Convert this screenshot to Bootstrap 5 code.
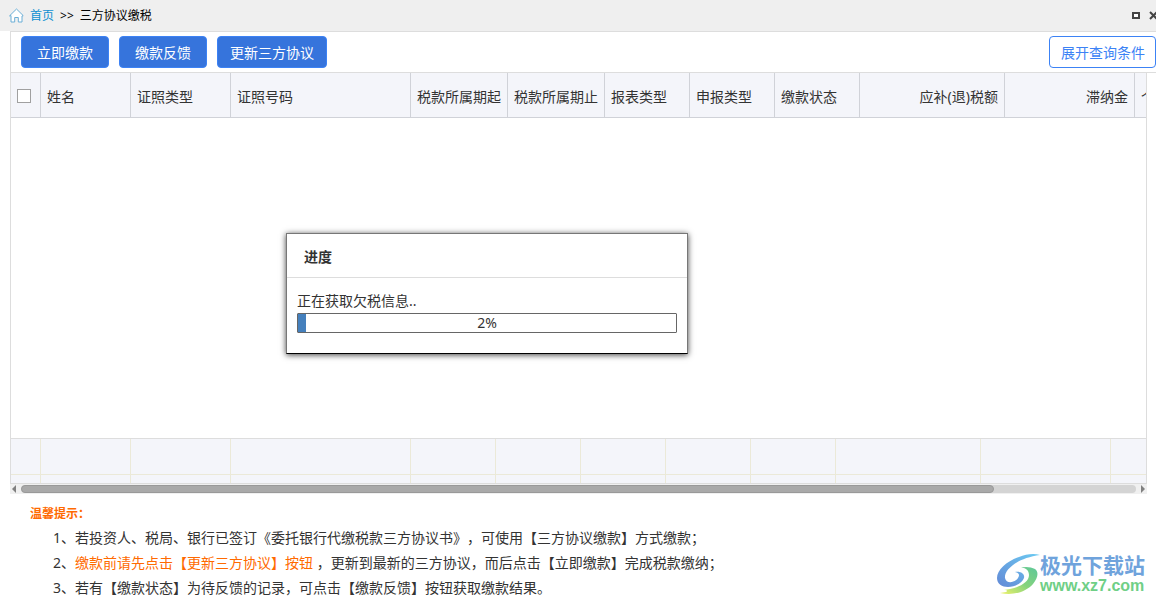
<!DOCTYPE html>
<html lang="zh-CN">
<head>
<meta charset="utf-8">
<meta name="viewport" content="width=device-width, initial-scale=1">
<title>三方协议缴税</title>
<link href="https://cdn.jsdelivr.net/npm/bootstrap@5.3.0/dist/css/bootstrap.min.css" rel="stylesheet">
<style>
  body { font: 14px/20px "Noto Sans", "Noto Sans CJK SC", sans-serif; color: #333; background: #fff; text-spacing-trim: space-all; overflow-x: hidden; }
  .titlebar { height: 31px; background: #efefef; font-size: 12px; color: #000; padding: 0 0 0 9px; }
  .titlebar a { color: #0e90d2; }
  .crumbs { gap: 6px; margin-left: 6px; }
  .win-btn { border: 0; background: none; padding: 0; line-height: 0; }
  .pane { margin-left: 10px; }
  .toolbar { border: 1px solid #ddd; border-right: 0; padding: 4px 0 4px 10px; gap: 10px; overflow: hidden; }
  .toolbar .btn { height: 32px; padding: 1px 15px 0; font-size: 14px; line-height: 30px; border-radius: 4px; white-space: nowrap; }
  .act { --bs-btn-color: #fff; --bs-btn-bg: #3674dc; --bs-btn-border-color: #3c82f5; }
  .toolbar .act-long { padding: 1px 12px 0; }
  .query { --bs-btn-color: #3c82f5; --bs-btn-border-color: #3c82f5; }
  .toolbar .query { padding: 1px 10px 0 11px; }
  .grid-box { margin-right: 9px; border: 1px solid #ddd; border-width: 0 1px 1px; }
  .clip { overflow: hidden; background: #f4f5fa; }
  .grid-table { table-layout: fixed; width: 1264px; border-collapse: separate; border-spacing: 0; }
  .grid-table th { height: 45px; padding: 4px 6px 0; font-weight: 400; white-space: nowrap; border-right: 1px solid #d0d2d8; border-bottom: 1px solid #d0d2d8; }
  .grid-table th.pick { padding-top: 2px; }
  .grid-table td { height: 36px; padding: 0; border-right: 1px solid #ebe9d8; border-bottom: 1px solid #ebe9d8; }
  .grid-table tr.slim td { height: 8px; border-bottom: 0; }
  .grid-table .form-check-input { width: 14px; height: 14px; margin: 0; border: 1px solid #a0a0a0; border-radius: 0; display: block; }
  .grid-body { height: 320px; }
  .grid-foot { border-top: 1px solid #ddd; }
  .hbar { margin-right: 9px; height: 10px; background: #f0f0f0; }
  .hbar-track { height: 8px; background: #d4d4d4; border-radius: 4px; margin: 0 4px; }
  .hbar-thumb { height: 8px; background: #a9a9a9; border: 1px solid #999; border-radius: 4px; }
  .tips { padding: 10px 0 0 30px; line-height: 25px; }
  .tips h2 { font-size: 12px; line-height: 20px; font-weight: 700; margin: 0 0 1px; }
  .tips p { margin: 0 0 0 23px; }
  .hot { color: #ff6a00; }
  .progress-dialog { position: absolute; left: 286px; top: 233px; width: 402px; border: 1px solid #777; border-bottom-color: #000; background: #fff; box-shadow: 0 1px 6px rgba(0,0,0,.75); }
  .progress-dialog h1 { font-size: 14px; line-height: 20px; font-weight: 700; margin: 0; padding: 13px 17px 10px; border-bottom: 1px solid #ddd; }
  .dialog-body { padding: 13px 10px 20px; }
  .meter { height: 20px; border: 1px solid #666; border-radius: 1px; background: #fff; font-size: 14px; position: relative; margin-top: 2px; }
  .meter .progress-bar { background: #4580bd; }
  .meter-text { position: absolute; inset: 0; text-align: center; line-height: 18px; color: #333; }
  .watermark { position: absolute; right: 11px; bottom: 7px; line-height: 1; }
  .wm-name { font: 700 21px/24px "Noto Sans CJK SC", sans-serif; color: #6fa3dc; }
  .wm-url { font: 700 16px/20px "Liberation Sans", sans-serif; color: #6fcf86; }
</style>
</head>
<body>
<header class="titlebar d-flex align-items-center">
  <svg width="15" height="15" viewBox="0 0 15 15" fill="#fff" stroke="#6aaed6" stroke-linejoin="round" stroke-linecap="round" aria-hidden="true"><path d="M.8 7.6 7.5 1l6.700 6.600-1.200.4v6H9.300V9.500H5.700V14H2V8z"/></svg>
  <nav class="crumbs d-flex" aria-label="位置">
    <a href="#" class="text-decoration-none">首页</a>
    <span>&gt;&gt;</span>
    <span>三方协议缴税</span>
  </nav>
  <div class="ms-auto d-flex gap-2">
    <button type="button" class="win-btn" aria-label="最大化"><svg width="10" height="10" viewBox="0 0 10 10"><path d="M2 2h6v5H2z" fill="#fff" stroke="#444" stroke-width="2"/></svg></button>
    <button type="button" class="win-btn" aria-label="关闭"><svg width="7" height="10" viewBox="0 0 7 10"><path d="M1 1l7 7M8 1L1 8" stroke="#444" stroke-width="2"/></svg></button>
  </div>
</header>

<main class="pane">
  <div class="toolbar d-flex">
    <button type="button" class="btn act">立即缴款</button>
    <button type="button" class="btn act">缴款反馈</button>
    <button type="button" class="btn act act-long">更新三方协议</button>
    <button type="button" class="btn query ms-auto">展开查询条件</button>
  </div>

  <section class="grid-box">
    <div class="clip">
      <table class="grid-table">
        <colgroup><col style="width:30px"><col style="width:90px"><col style="width:100px"><col style="width:180px"><col style="width:97px"><col style="width:97px"><col style="width:85px"><col style="width:85px"><col style="width:85px"><col style="width:145px"><col style="width:130px"><col></colgroup>
        <thead><tr>
          <th class="pick"><input type="checkbox" class="form-check-input" aria-label="全选"></th>
          <th>姓名</th><th>证照类型</th><th>证照号码</th><th>税款所属期起</th><th>税款所属期止</th><th>报表类型</th><th>申报类型</th><th>缴款状态</th><th class="text-end">应补(退)税额</th><th class="text-end">滞纳金</th><th>个</th>
        </tr></thead>
      </table>
    </div>
    <div class="grid-body"></div>
    <div class="clip grid-foot">
      <table class="grid-table">
        <colgroup><col style="width:30px"><col style="width:90px"><col style="width:100px"><col style="width:180px"><col style="width:85px"><col style="width:85px"><col style="width:85px"><col style="width:85px"><col style="width:85px"><col style="width:145px"><col style="width:130px"><col></colgroup>
        <tbody>
          <tr><td></td><td></td><td></td><td></td><td></td><td></td><td></td><td></td><td></td><td></td><td></td><td></td></tr>
          <tr class="slim"><td></td><td></td><td></td><td></td><td></td><td></td><td></td><td></td><td></td><td></td><td></td><td></td></tr>
        </tbody>
      </table>
    </div>
  </section>
  <div class="hbar d-flex align-items-center">
    <svg width="7" height="8" viewBox="0 0 7 8"><path d="M6 0v8L2 4z" fill="#808080"/></svg>
    <div class="hbar-track flex-grow-1"><div class="hbar-thumb" style="width:87.3%"></div></div>
    <svg width="7" height="8" viewBox="0 0 7 8"><path d="M1 0v8l4-4z" fill="#808080"/></svg>
  </div>
</main>

<section class="tips">
  <h2 class="hot">温馨提示：</h2>
  <p>1、若投资人、税局、银行已签订《委托银行代缴税款三方协议书》，可使用【三方协议缴款】方式缴款；</p>
  <p>2、<span class="hot">缴款前请先点击【更新三方协议】按钮</span> ，更新到最新的三方协议，而后点击【立即缴款】完成税款缴纳；</p>
  <p>3、若有【缴款状态】为待反馈的记录，可点击【缴款反馈】按钮获取缴款结果。</p>
</section>

<div class="progress-dialog" role="dialog" aria-labelledby="dlg-title">
  <h1 id="dlg-title">进度</h1>
  <div class="dialog-body">
    <div>正在获取欠税信息..</div>
    <div class="progress meter" role="progressbar" aria-valuenow="2" aria-valuemin="0" aria-valuemax="100">
      <div class="progress-bar" style="width:2%"></div>
      <span class="meter-text">2%</span>
    </div>
  </div>
</div>

<div class="watermark d-flex align-items-center">
  <svg width="43" height="42" viewBox="0 0 43 42" aria-hidden="true">
    <defs>
      <linearGradient id="wmBlue" x1="0" y1="1" x2="1" y2="0"><stop offset="0" stop-color="#6389d6"/><stop offset="1" stop-color="#6ccbf2"/></linearGradient>
      <linearGradient id="wmGreen" x1="0" y1="1" x2="1" y2="0"><stop offset="0" stop-color="#f0f36a"/><stop offset=".5" stop-color="#86d37c"/><stop offset="1" stop-color="#5cc79a"/></linearGradient>
    </defs>
    <path d="M43 2C37 0 29 1 22 4 10 8 0 17 0 25c0 6 5 9 11 9 7 0 14-4 16-9 1-4-3-7-9-6 4 1 5 3 3 6-3 5-12 6-13 0C7 17 20 5 43 2z" fill="url(#wmBlue)"/>
    <path d="M23 15c5-1 9 2 9 7 0 7-9 12-19 14l-6 1c3 0 4 1 2 2l-6 1c13 3 26-1 33-9 5-6 6-12 2-15-4-2-10-3-15-1z" fill="url(#wmGreen)"/>
  </svg>
  <div>
    <div class="wm-name">极光下载站</div>
    <div class="wm-url">www.xz7.com</div>
  </div>
</div>
<script src="https://cdn.jsdelivr.net/npm/bootstrap@5.3.0/dist/js/bootstrap.bundle.min.js"></script>
</body>
</html>
